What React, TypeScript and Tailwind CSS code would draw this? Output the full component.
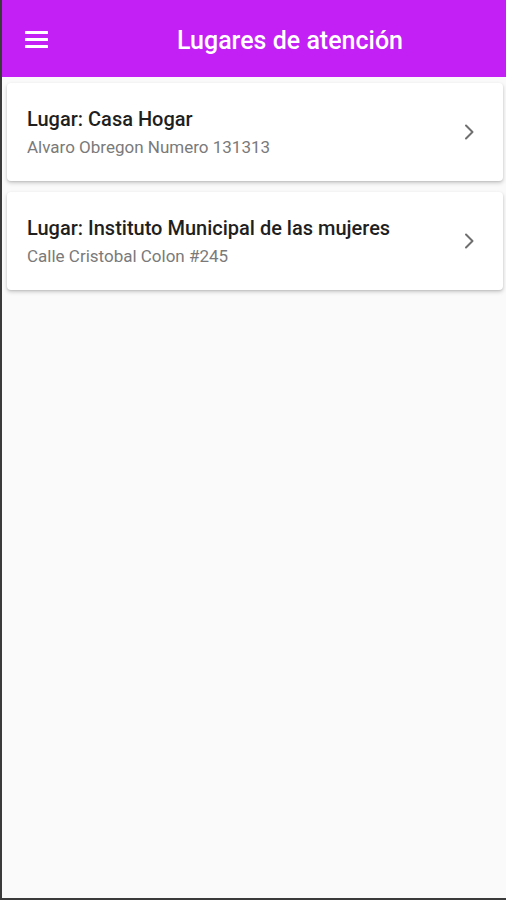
export default function App() {
  const places = [
    { id: 1, name: "Casa Hogar", address: "Alvaro Obregon Numero 131313" },
    { id: 2, name: "Instituto Municipal de las mujeres", address: "Calle Cristobal Colon #245" },
  ];

  return (
    <div
      className="h-[900px] w-full bg-[#fafafa] border-l-2 border-b-2 border-[#3a3a3a] flex flex-col"
      style={{ fontFamily: "Roboto, 'Noto Sans', sans-serif" }}
    >
      <header className="h-[77px] bg-[#c320f5] flex items-center shrink-0">
        <button className="ml-[23px] w-[23px] h-[17px] flex items-center justify-center mt-[1px]">
          <svg width="23" height="17" viewBox="0 0 23 17" fill="white">
            <rect x="0" y="0" width="23" height="3" rx="0.5" />
            <rect x="0" y="7" width="23" height="3" rx="0.5" />
            <rect x="0" y="14" width="23" height="3" rx="0.5" />
          </svg>
        </button>
        <h1 className="flex-1 text-center text-white text-[25px] font-medium pl-[26px] pt-[4px]">
          Lugares de atención
        </h1>
      </header>

      <main className="flex flex-col gap-[11px] pl-[5px] pr-[3px] pt-[6px]">
        {places.map((p) => (
          <div
            key={p.id}
            className="bg-white rounded-[4px] shadow-[0_2px_4px_rgba(0,0,0,0.18),0_1px_2px_rgba(0,0,0,0.1)] h-[98px] flex items-center pl-[20px] pr-[28px]"
          >
            <div className="flex-1">
              <div className="text-[20px] font-medium text-[#1f1f1f] leading-[24px]">
                Lugar: {p.name}
              </div>
              <div className="text-[17px] text-[#7a7a7a] leading-[22px] mt-[5px]">{p.address}</div>
            </div>
            <svg width="12" height="16" viewBox="0 0 12 16" fill="none">
              <polyline
                points="3,1.5 9.5,8 3,14.5"
                stroke="#6f6f6f"
                strokeWidth="2"
                strokeLinecap="round"
                strokeLinejoin="round"
              />
            </svg>
          </div>
        ))}
      </main>
    </div>
  );
}
